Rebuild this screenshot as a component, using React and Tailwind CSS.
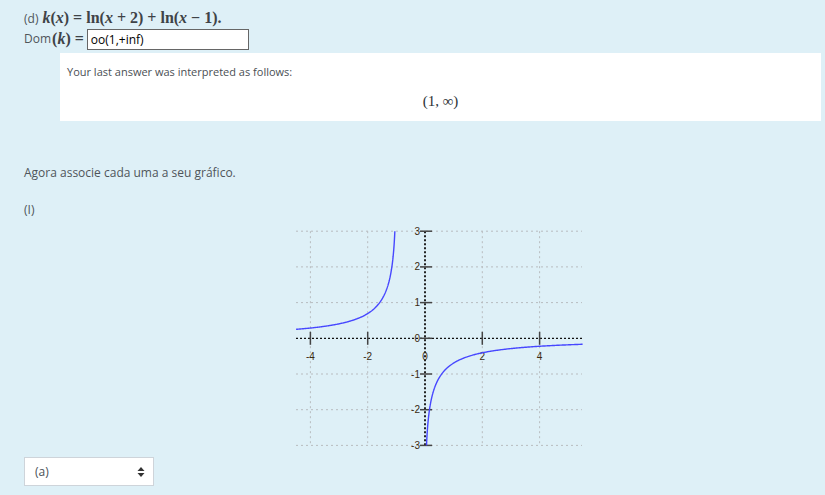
import React from 'react'

const X0 = 135
const Y0 = 117.3
const UX = 28.65
const UY = 35.7

const f = (x) => Math.log(x / (x + 1))
const inv = (y) => Math.exp(y) / (1 - Math.exp(y))

// sample both along x and along y so the steep end near the asymptote stays smooth
function curvePath(a, b) {
  const xs = []
  for (let i = 0; i <= 200; i++) xs.push(a + ((b - a) * i) / 200)
  const ya = f(a)
  const yb = f(b)
  for (let i = 0; i <= 200; i++) xs.push(inv(ya + ((yb - ya) * i) / 200))
  xs.sort((p, q) => p - q)
  const pts = xs
    .filter((x) => x >= a - 1e-9 && x <= b + 1e-9)
    .map((x) => `${(X0 + x * UX).toFixed(2)},${(Y0 - f(x) * UY).toFixed(2)}`)
  return 'M' + pts.join(' L')
}

function Graph() {
  const xs = [-4, -2, 2, 4]
  const ys = [3, 2, 1, -1, -2, -3]
  const left = 6
  const right = 292
  const top = Y0 - 3 * UY
  const bottom = Y0 + 3 * UY
  const leftBranch = curvePath(-4.5, inv(3))
  const rightBranch = curvePath(inv(-3), 5.5)
  return (
    <svg width="300" height="232" viewBox="0 0 300 232" className="block">
      {xs.map((x) => (
        <line key={'gx' + x} x1={X0 + x * UX} x2={X0 + x * UX} y1={top} y2={bottom} stroke="#b8bcbf" strokeWidth="1" strokeDasharray="2 3" />
      ))}
      {ys.map((y) => (
        <line key={'gy' + y} x1={left} x2={right} y1={Y0 - y * UY} y2={Y0 - y * UY} stroke="#b8bcbf" strokeWidth="1" strokeDasharray="2 3" />
      ))}
      <line x1={left} x2={right} y1={Y0} y2={Y0} stroke="#111" strokeWidth="1.2" strokeDasharray="2 2" />
      <line x1={X0} x2={X0} y1={top} y2={bottom} stroke="#222" strokeWidth="2" strokeDasharray="2 2" />
      {xs.map((x) => (
        <line key={'tx' + x} x1={X0 + x * UX} x2={X0 + x * UX} y1={Y0 - 6.5} y2={Y0 + 6.5} stroke="#444" strokeWidth="1.5" />
      ))}
      {[3, 2, 1, 0, -1, -2, -3].map((y) => (
        <line key={'ty' + y} x1={X0 - 5} x2={X0 + 7} y1={Y0 - y * UY} y2={Y0 - y * UY} stroke="#444" strokeWidth="1.5" />
      ))}
      {[-4, -2, 0, 2, 4].map((x) => (
        <text key={'lx' + x} x={X0 + x * UX} y={Y0 + 22} fontSize="10" textAnchor="middle" fill="#3a2a10" fontFamily="'Liberation Sans', Arial, sans-serif">{x}</text>
      ))}
      {[3, 2, 1, 0, -1, -2, -3].map((y) => (
        <text key={'ly' + y} x={X0 - 5} y={Y0 - y * UY + 3.5} fontSize="10" textAnchor="end" fill="#3a2a10" fontFamily="'Liberation Sans', Arial, sans-serif">{y}</text>
      ))}
      <path d={leftBranch} fill="none" stroke="#4747ff" strokeWidth="1.4" />
      <path d={rightBranch} fill="none" stroke="#4747ff" strokeWidth="1.4" />
    </svg>
  )
}

export default function App() {
  const sans = "font-['Open_Sans','Noto_Sans',sans-serif]"
  const serif = "font-['Liberation_Serif','DejaVu_Serif',serif]"
  return (
    <div className={`w-[825px] h-[495px] bg-[#def0f7] overflow-hidden ${sans} text-[#4f555a]`}>
      <div className="pl-6 pt-[6px]">
        <div className="flex items-baseline h-[20px] text-[12px]">
          <span>(d)</span>
          <span className={`${serif} ml-[4px] text-[16px] font-bold text-[#3e4347]`}>
            <i>k</i>(<i>x</i>) = ln(<i>x</i> + 2) + ln(<i>x</i> − 1).
          </span>
        </div>
        <div className="flex items-center h-[22px] text-[12px] mt-[2px]">
          <span>Dom</span>
          <span className={`${serif} text-[16px] font-bold text-[#3e4347] ml-[1px]`}>(<i>k</i>) =</span>
          <div className="ml-[3px] w-[162px] h-[21px] border border-[#666] bg-white text-[12px] text-black pl-[3px] leading-[19px]">oo(1,+inf)</div>
        </div>
      </div>
      <div className="ml-[60px] mr-[4px] mt-[3px] h-[68px] bg-white pl-[7px] pt-[11px]">
        <div className="text-[11px] text-[#4a4f54]">Your last answer was interpreted as follows:</div>
        <div className={`${serif} text-center text-[15px] text-[#2d3236] mt-[9px] pr-[7px]`}>(1, ∞)</div>
      </div>
      <div className="pl-6 mt-[43px] text-[12px]">Agora associe cada uma a seu gráfico.</div>
      <div className="pl-6 mt-[19px] text-[12px]">(I)</div>
      <div className="ml-[290px] mt-[2px]">
        <Graph />
      </div>
      <div className="ml-6 mt-[4px] w-[130px] h-[29px] bg-white border border-[#ced4da] flex items-center justify-between pl-[10px] pr-[8px] text-[12px] text-[#495057]">
        <span>(a)</span>
        <svg width="8" height="10" viewBox="0 0 8 10">
          <path d="M4 0 L7.5 4 L0.5 4 Z" fill="#333" />
          <path d="M4 10 L7.5 6 L0.5 6 Z" fill="#333" />
        </svg>
      </div>
    </div>
  )
}
